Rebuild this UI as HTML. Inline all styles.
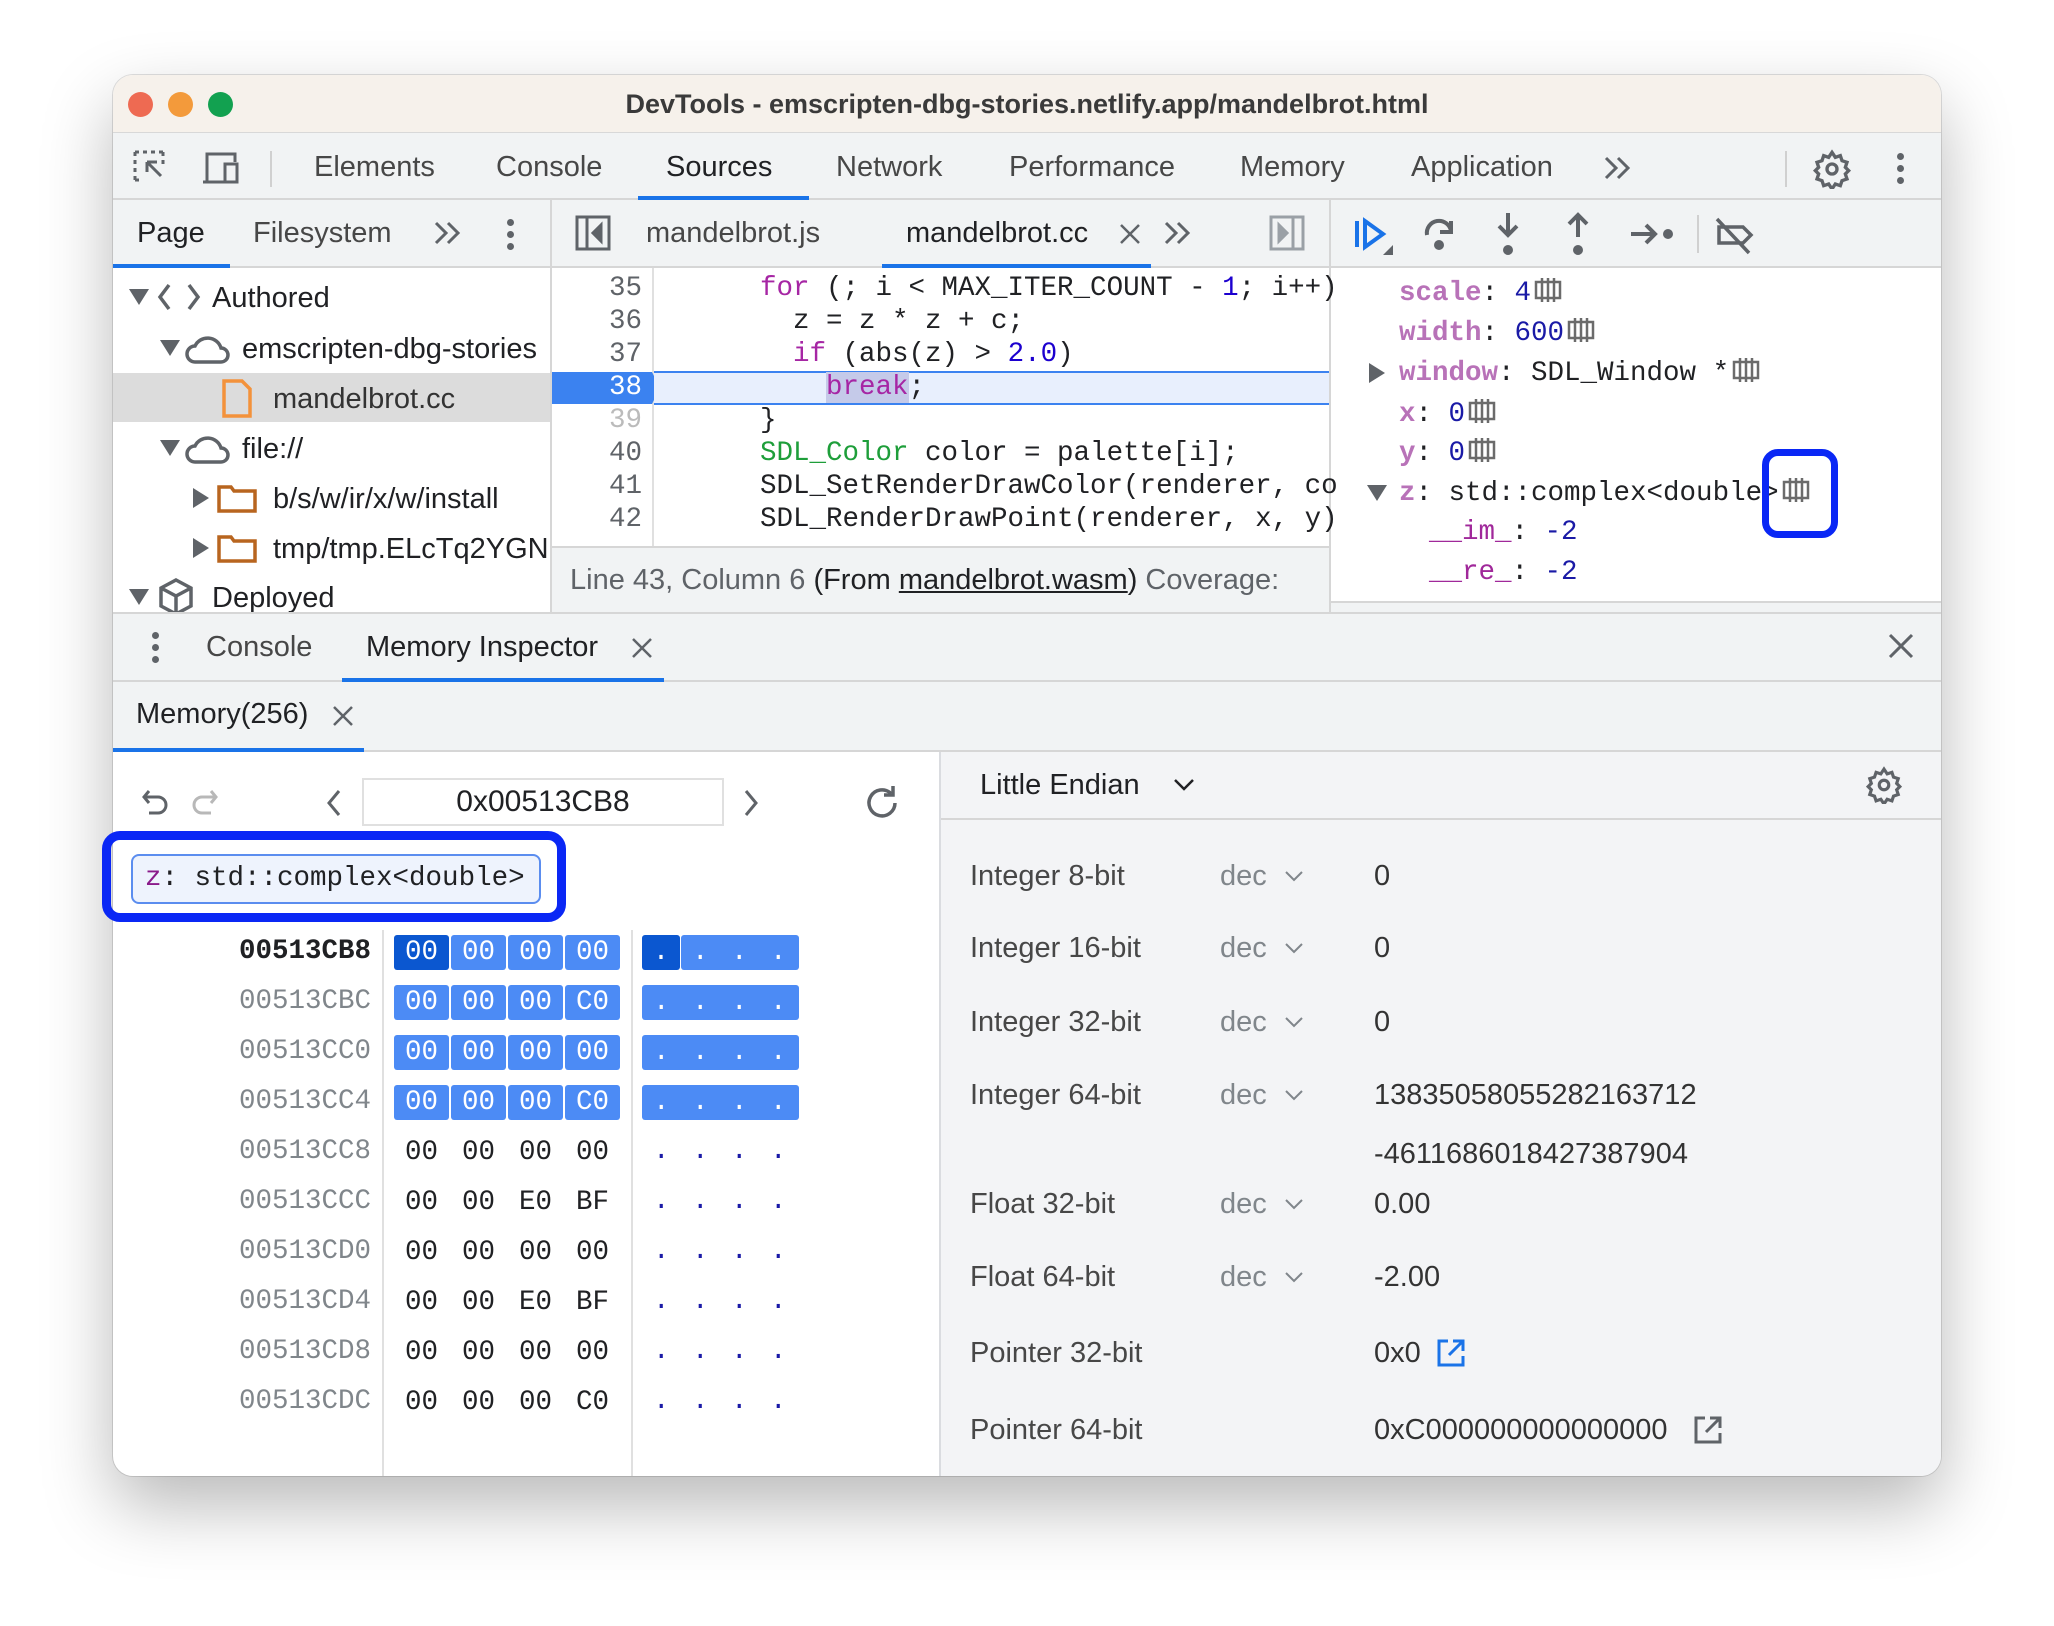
<!DOCTYPE html>
<html><head><meta charset="utf-8"><style>
*{margin:0;padding:0;box-sizing:border-box}
body{width:2054px;height:1626px;background:#fff;position:relative;overflow:hidden;font-family:"Liberation Sans",Arial,sans-serif;color:#202124}
.a{position:absolute;white-space:nowrap}
.win{position:absolute;left:113px;top:75px;width:1828px;height:1401px;border-radius:20px;overflow:hidden;background:#fff;box-shadow:0 30px 70px rgba(0,0,0,.28),0 0 0 1px rgba(0,0,0,.12)}
.ui{font-size:29px;line-height:40px;color:#474747}
.mono{font-family:"Liberation Mono","DejaVu Sans Mono",monospace;font-size:27.5px;line-height:33px;white-space:pre}
.hl{background:#f1f3f4}
.kw{color:#a626a4}.gr{color:#1e9e3a}.nu{color:#1c00cf}
.k{color:#b872b8;font-weight:bold}.v{color:#1a1aa6}
.cell{position:absolute;height:35px;line-height:35px;text-align:center;color:#fff;background:#4c8bf5;border-radius:3px}
.b{position:absolute;width:55px;height:35px;line-height:35px;text-align:center;color:#202124}
.mi{display:inline-block;vertical-align:-4px;margin-left:2px}
</style></head><body>
<div class="win">
 <div class="a" style="left:0;top:0;width:1828px;height:58px;background:#f6f1eb;border-bottom:1px solid #d8d8d8"></div>
 <div class="a" style="left:15px;top:17px;width:25px;height:25px;border-radius:50%;background:#ee6a52"></div>
 <div class="a" style="left:55px;top:17px;width:25px;height:25px;border-radius:50%;background:#f39a3b"></div>
 <div class="a" style="left:95px;top:17px;width:25px;height:25px;border-radius:50%;background:#12a150"></div>
 <div class="a" style="left:0;top:9px;width:1828px;text-align:center;font-size:27px;line-height:40px;font-weight:bold;color:#3a3a3a">DevTools - emscripten-dbg-stories.netlify.app/mandelbrot.html</div>
 <div class="a hl" style="left:0;top:58px;width:1828px;height:67px;border-bottom:2px solid #d6d6d6"></div>
 <svg class="a" style="left:20px;top:73px" width="40" height="40" viewBox="0 0 40 40" fill="none" stroke="#5f6368" stroke-width="3"><path d="M2 4h4M10 4h4M18 4h4M26 4h4M2 4v4M2 12v4M2 20v4M2 28v4M2 32h4M30 4v4M30 12v4"/><path d="M14 14l14 14M14 14v10M14 14h10"/></svg>
 <svg class="a" style="left:88px;top:73px" width="44" height="40" viewBox="0 0 44 40" fill="none" stroke="#5f6368" stroke-width="3"><path d="M6 34V6h28v8M2 34h22"/><rect x="24" y="16" width="12" height="18"/></svg>
 <div class="a" style="left:157px;top:76px;width:2px;height:36px;background:#d0d0d0"></div>
 <div class="a ui" style="left:201px;top:72px">Elements</div>
 <div class="a ui" style="left:383px;top:72px">Console</div>
 <div class="a ui" style="left:553px;top:72px;color:#202124">Sources</div>
 <div class="a" style="left:525px;top:121px;width:171px;height:4px;background:#1a73e8"></div>
 <div class="a ui" style="left:723px;top:72px">Network</div>
 <div class="a ui" style="left:896px;top:72px">Performance</div>
 <div class="a ui" style="left:1127px;top:72px">Memory</div>
 <div class="a ui" style="left:1298px;top:72px">Application</div>
 <svg class="a" style="left:1490px;top:80px" width="30" height="26" fill="none" stroke="#5f6368" stroke-width="3"><path d="M3 3l10 10L3 23M15 3l10 10-10 10"/></svg>
 <div class="a" style="left:1672px;top:76px;width:2px;height:36px;background:#d0d0d0"></div>
 <svg class="a" style="left:1699px;top:74px" width="40" height="40" viewBox="0 0 24 24" fill="none" stroke="#5f6368" stroke-width="2"><circle cx="12" cy="12" r="3"/><path d="M12 2l2 3 3-1 1 3 3 1-1 3 2 2-2 2 1 3-3 1-1 3-3-1-2 3-2-3-3 1-1-3-3-1 1-3-2-2 2-2-1-3 3-1 1-3 3 1z"/></svg>
 <div class="a" style="left:1784px;top:78px;width:7px;height:7px;border-radius:50%;background:#5f6368;box-shadow:0 12px 0 #5f6368,0 24px 0 #5f6368"></div>
 <div class="a hl" style="left:0;top:125px;width:1828px;height:68px;border-bottom:2px solid #d6d6d6"></div>
 <div class="a ui" style="left:24px;top:138px;color:#202124">Page</div>
 <div class="a" style="left:0;top:189px;width:117px;height:4px;background:#1a73e8"></div>
 <div class="a ui" style="left:140px;top:138px">Filesystem</div>
 <svg class="a" style="left:320px;top:145px" width="30" height="26" fill="none" stroke="#5f6368" stroke-width="3"><path d="M3 3l10 10L3 23M15 3l10 10-10 10"/></svg>
 <div class="a" style="left:394px;top:144px;width:7px;height:7px;border-radius:50%;background:#5f6368;box-shadow:0 12px 0 #5f6368,0 24px 0 #5f6368"></div>
 <div class="a" style="left:437px;top:125px;width:2px;height:420px;background:#d6d6d6"></div>
 <svg class="a" style="left:462px;top:140px" width="36" height="36" viewBox="0 0 36 36" fill="none" stroke="#5f6368" stroke-width="3"><rect x="2" y="2" width="32" height="32"/><path d="M12 2v32M26 10l-8 8 8 8z" fill="#5f6368"/></svg>
 <div class="a ui" style="left:533px;top:138px">mandelbrot.js</div>
 <div class="a ui" style="left:793px;top:138px;color:#202124">mandelbrot.cc</div>
 <svg class="a" style="left:1006px;top:148px" width="22" height="22" stroke="#5f6368" stroke-width="2.5"><path d="M2 2l18 18M20 2L2 20"/></svg>
 <div class="a" style="left:769px;top:189px;width:269px;height:4px;background:#1a73e8"></div>
 <svg class="a" style="left:1050px;top:145px" width="30" height="26" fill="none" stroke="#5f6368" stroke-width="3"><path d="M3 3l10 10L3 23M15 3l10 10-10 10"/></svg>
 <svg class="a" style="left:1156px;top:140px" width="36" height="36" viewBox="0 0 36 36" fill="none" stroke="#9aa0a6" stroke-width="3"><rect x="2" y="2" width="32" height="32"/><path d="M24 2v32M10 10l8 8-8 8z" fill="#9aa0a6"/></svg>
 <div class="a" style="left:1216px;top:125px;width:2px;height:486px;background:#d6d6d6"></div>
 <svg class="a" style="left:1240px;top:140px" width="40" height="40" viewBox="0 0 40 40"><path d="M4 6v26" stroke="#1a73e8" stroke-width="4"/><path d="M12 6l18 13-18 13z" fill="none" stroke="#1a73e8" stroke-width="4"/><path d="M40 30v10h-10z" fill="#5f6368"/></svg>
 <svg class="a" style="left:1308px;top:140px" width="40" height="40" viewBox="0 0 40 40" fill="none" stroke="#5f6368" stroke-width="4"><path d="M6 20a12 12 0 0 1 24-4"/><path d="M30 6v11h-11"/><circle cx="18" cy="30" r="5" fill="#5f6368" stroke="none"/></svg>
 <svg class="a" style="left:1380px;top:136px" width="30" height="46" viewBox="0 0 30 46" fill="none" stroke="#5f6368" stroke-width="4"><path d="M15 2v22M6 15l9 9 9-9"/><circle cx="15" cy="39" r="5" fill="#5f6368" stroke="none"/></svg>
 <svg class="a" style="left:1450px;top:136px" width="30" height="46" viewBox="0 0 30 46" fill="none" stroke="#5f6368" stroke-width="4"><path d="M15 26V4M6 13l9-9 9 9"/><circle cx="15" cy="39" r="5" fill="#5f6368" stroke="none"/></svg>
 <svg class="a" style="left:1516px;top:144px" width="46" height="30" viewBox="0 0 46 30" fill="none" stroke="#5f6368" stroke-width="4"><path d="M2 15h24M17 6l9 9-9 9"/><circle cx="39" cy="15" r="5" fill="#5f6368" stroke="none"/></svg>
 <div class="a" style="left:1584px;top:140px;width:2px;height:38px;background:#d0d0d0"></div>
 <svg class="a" style="left:1600px;top:140px" width="44" height="40" viewBox="0 0 44 40" fill="none" stroke="#5f6368" stroke-width="3.5"><path d="M6 12h24l8 8-8 8H6z"/><path d="M4 4l32 34"/></svg>
 <!-- file tree -->
 <div class="a" style="left:0;top:298px;width:437px;height:49px;background:#dcdcdc"></div>
 <svg class="a" style="left:16px;top:214px" width="20" height="16"><path d="M0 0h20L10 16z" fill="#5f6368"/></svg>
 <svg class="a" style="left:44px;top:207px" width="44" height="30" fill="none" stroke="#5f6368" stroke-width="3.5"><path d="M12 3L3 15l9 12M32 3l9 12-9 12"/></svg>
 <div class="a ui" style="left:99px;top:203px;color:#202124">Authored</div>
 <svg class="a" style="left:47px;top:265px" width="20" height="16"><path d="M0 0h20L10 16z" fill="#5f6368"/></svg>
 <svg class="a" style="left:72px;top:257px" width="46" height="32" fill="none" stroke="#5f6368" stroke-width="3.5"><path d="M10 30a8 8 0 0 1 0-16 14 14 0 0 1 26 2 7 7 0 0 1 0 14z"/></svg>
 <div class="a ui" style="left:129px;top:254px;color:#202124">emscripten-dbg-stories</div>
 <svg class="a" style="left:108px;top:303px" width="32" height="40" fill="none" stroke="#f3923b" stroke-width="3.5"><path d="M3 3h18l8 8v27H3z"/></svg>
 <div class="a ui" style="left:160px;top:304px;color:#333">mandelbrot.cc</div>
 <svg class="a" style="left:47px;top:365px" width="20" height="16"><path d="M0 0h20L10 16z" fill="#5f6368"/></svg>
 <svg class="a" style="left:72px;top:357px" width="46" height="32" fill="none" stroke="#5f6368" stroke-width="3.5"><path d="M10 30a8 8 0 0 1 0-16 14 14 0 0 1 26 2 7 7 0 0 1 0 14z"/></svg>
 <div class="a ui" style="left:129px;top:354px;color:#202124">file://</div>
 <svg class="a" style="left:80px;top:413px" width="16" height="20"><path d="M0 0v20L16 10z" fill="#5f6368"/></svg>
 <svg class="a" style="left:104px;top:408px" width="40" height="30" fill="none" stroke="#b8651f" stroke-width="3.5"><path d="M2 4h12l3 4h21v20H2z"/></svg>
 <div class="a ui" style="left:160px;top:404px;color:#202124">b/s/w/ir/x/w/install</div>
 <svg class="a" style="left:80px;top:463px" width="16" height="20"><path d="M0 0v20L16 10z" fill="#5f6368"/></svg>
 <svg class="a" style="left:104px;top:458px" width="40" height="30" fill="none" stroke="#b8651f" stroke-width="3.5"><path d="M2 4h12l3 4h21v20H2z"/></svg>
 <div class="a ui" style="left:160px;top:454px;color:#202124">tmp/tmp.ELcTq2YGN</div>
 <svg class="a" style="left:16px;top:514px" width="20" height="16"><path d="M0 0h20L10 16z" fill="#5f6368"/></svg>
 <svg class="a" style="left:45px;top:503px" width="36" height="38" fill="none" stroke="#5f6368" stroke-width="3.5"><path d="M18 2l15 8v18l-15 8-15-8V10zM3 10l15 8 15-8M18 18v18"/></svg>
 <div class="a ui" style="left:99px;top:503px;color:#202124">Deployed</div>
 <!-- editor -->
 <div class="a" style="left:539px;top:193px;width:2px;height:352px;background:#e0e0e0"></div>
 <div class="a" style="left:439px;top:297px;width:100px;height:32px;background:#3b82f0"></div>
 <svg class="a" style="left:539px;top:297px" width="10" height="32"><path d="M0 0l8 16-8 16z" fill="#3b82f0"/></svg>
 <div class="a" style="left:541px;top:296px;width:675px;height:34px;background:#e8effd;border-top:2px solid #3b82f0;border-bottom:2px solid #3b82f0"></div>
 <div class="a mono" style="left:439px;top:197px;width:90px;text-align:right;color:#5f6368">35<br>36<br>37<br><span style="color:#fff">38</span><br><span style="color:#bbb">39</span><br>40<br>41<br>42</div>
 <div class="a mono" style="left:647px;top:197px;color:#202124"><span class="kw">for</span> (; i &lt; MAX_ITER_COUNT - <span class="nu">1</span>; i++)<br>  z = z * z + c;<br>  <span class="kw">if</span> (abs(z) &gt; <span class="nu">2.0</span>)<br>    <span class="kw" style="background:#c5cae9">break</span>;<br>}<br><span class="gr">SDL_Color</span> color = palette[i];<br>SDL_SetRenderDrawColor(renderer, co<br>SDL_RenderDrawPoint(renderer, x, y)</div>
 <div class="a hl" style="left:439px;top:471px;width:777px;height:140px;border-top:2px solid #d6d6d6"></div>
 <div class="a ui" style="left:457px;top:485px;color:#5f6368">Line 43, Column 6 <span style="color:#202124">(From <u>mandelbrot.wasm</u>)</span> Coverage:</div>
 <!-- scope -->
 <div class="a mono" style="left:1286px;top:201px"><span class="k">scale</span>: <span class="v">4</span><svg class="mi" width="30" height="28"><g fill="none" stroke="#6b6b6b" stroke-width="2.5"><rect x="3" y="6" width="24" height="16"/><path d="M9 2v24M15 2v24M21 2v24"/></g></svg></div>
 <div class="a mono" style="left:1286px;top:241px"><span class="k">width</span>: <span class="v">600</span><svg class="mi" width="30" height="28"><g fill="none" stroke="#6b6b6b" stroke-width="2.5"><rect x="3" y="6" width="24" height="16"/><path d="M9 2v24M15 2v24M21 2v24"/></g></svg></div>
 <svg class="a" style="left:1256px;top:288px" width="16" height="20"><path d="M0 0v20L16 10z" fill="#5f6368"/></svg>
 <div class="a mono" style="left:1286px;top:281px"><span class="k">window</span>: SDL_Window *<svg class="mi" width="30" height="28"><g fill="none" stroke="#6b6b6b" stroke-width="2.5"><rect x="3" y="6" width="24" height="16"/><path d="M9 2v24M15 2v24M21 2v24"/></g></svg></div>
 <div class="a mono" style="left:1286px;top:322px"><span class="k">x</span>: <span class="v">0</span><svg class="mi" width="30" height="28"><g fill="none" stroke="#6b6b6b" stroke-width="2.5"><rect x="3" y="6" width="24" height="16"/><path d="M9 2v24M15 2v24M21 2v24"/></g></svg></div>
 <div class="a mono" style="left:1286px;top:361px"><span class="k">y</span>: <span class="v">0</span><svg class="mi" width="30" height="28"><g fill="none" stroke="#6b6b6b" stroke-width="2.5"><rect x="3" y="6" width="24" height="16"/><path d="M9 2v24M15 2v24M21 2v24"/></g></svg></div>
 <svg class="a" style="left:1254px;top:410px" width="20" height="16"><path d="M0 0h20L10 16z" fill="#5f6368"/></svg>
 <div class="a mono" style="left:1286px;top:401px"><span class="k">z</span>: std::complex&lt;double&gt;<svg class="mi" width="30" height="28"><g fill="none" stroke="#6b6b6b" stroke-width="2.5"><rect x="3" y="6" width="24" height="16"/><path d="M9 2v24M15 2v24M21 2v24"/></g></svg></div>
 <div class="a mono" style="left:1316px;top:441px"><span style="color:#a0289a">__im_</span>: <span class="v">-2</span></div>
 <div class="a mono" style="left:1316px;top:481px"><span style="color:#a0289a">__re_</span>: <span class="v">-2</span></div>
 <div class="a" style="left:1649px;top:374px;width:76px;height:89px;border:7px solid #0a27f5;border-radius:16px"></div>
 <div class="a hl" style="left:1218px;top:526px;width:610px;height:85px;border-top:2px solid #d6d6d6"></div>
 <!-- drawer tabs -->
 <div class="a hl" style="left:0;top:537px;width:1828px;height:70px;border-top:2px solid #d6d6d6;border-bottom:2px solid #d6d6d6"></div>
 <div class="a" style="left:39px;top:557px;width:7px;height:7px;border-radius:50%;background:#5f6368;box-shadow:0 12px 0 #5f6368,0 24px 0 #5f6368"></div>
 <div class="a ui" style="left:93px;top:552px">Console</div>
 <div class="a ui" style="left:253px;top:552px;color:#202124">Memory Inspector</div>
 <svg class="a" style="left:518px;top:562px" width="22" height="22" stroke="#5f6368" stroke-width="2.5"><path d="M2 2l18 18M20 2L2 20"/></svg>
 <div class="a" style="left:229px;top:603px;width:322px;height:4px;background:#1a73e8"></div>
 <svg class="a" style="left:1775px;top:558px" width="26" height="26" stroke="#5f6368" stroke-width="3"><path d="M2 2l22 22M24 2L2 24"/></svg>
 <div class="a hl" style="left:0;top:607px;width:1828px;height:70px;border-bottom:2px solid #d6d6d6"></div>
 <div class="a ui" style="left:23px;top:619px;color:#202124">Memory(256)</div>
 <svg class="a" style="left:219px;top:630px" width="22" height="22" stroke="#5f6368" stroke-width="2.5"><path d="M2 2l18 18M20 2L2 20"/></svg>
 <div class="a" style="left:0;top:673px;width:251px;height:4px;background:#1a73e8"></div>
 <!-- memory left -->
 <svg class="a" style="left:28px;top:712px" width="30" height="30" fill="none" stroke="#5f6368" stroke-width="3"><path d="M8 4L3 10l5 6M3 10h14a8 8 0 0 1 0 16H8"/></svg>
 <svg class="a" style="left:76px;top:712px" width="30" height="30" fill="none" stroke="#b8b8b8" stroke-width="3"><path d="M22 4l5 6-5 6M27 10H13a8 8 0 0 0 0 16h9"/></svg>
 <svg class="a" style="left:213px;top:714px" width="16" height="28" fill="none" stroke="#5f6368" stroke-width="3"><path d="M13 2L3 14l10 12"/></svg>
 <div class="a" style="left:249px;top:703px;width:362px;height:48px;border:2px solid #e0e0e0;text-align:center;font-size:30px;line-height:44px;color:#202124">0x00513CB8</div>
 <svg class="a" style="left:630px;top:714px" width="16" height="28" fill="none" stroke="#5f6368" stroke-width="3"><path d="M3 2l10 12L3 26"/></svg>
 <svg class="a" style="left:750px;top:708px" width="40" height="40" fill="none" stroke="#5f6368" stroke-width="3.5"><path d="M32 20a13 13 0 1 1-4-9.5"/><path d="M30 3v9h-9"/></svg>
 <div class="a mono" style="left:18px;top:779px;width:410px;height:50px;border:2px solid #5b8def;background:#eef3fd;border-radius:8px;line-height:46px;padding-left:12px"><span style="color:#8a1a8a">z</span>: std::complex&lt;double&gt;</div>
 <div class="a" style="left:269px;top:855px;width:2px;height:570px;background:#e0e0e0"></div>
 <div class="a" style="left:518px;top:855px;width:2px;height:570px;background:#e0e0e0"></div>
 <div class="a mono" style="left:40px;top:852px;width:218px;text-align:right;line-height:50px;color:#80868b"><b style="color:#202124">00513CB8</b><br>00513CBC<br>00513CC0<br>00513CC4<br>00513CC8<br>00513CCC<br>00513CD0<br>00513CD4<br>00513CD8<br>00513CDC</div>
 <div class="cell mono" style="left:281px;top:860px;width:55px;background:#0b57d0">00</div>
 <div class="cell mono" style="left:338px;top:860px;width:55px">00</div>
 <div class="cell mono" style="left:395px;top:860px;width:55px">00</div>
 <div class="cell mono" style="left:452px;top:860px;width:55px">00</div>
 <div class="cell mono" style="left:281px;top:910px;width:55px">00</div>
 <div class="cell mono" style="left:338px;top:910px;width:55px">00</div>
 <div class="cell mono" style="left:395px;top:910px;width:55px">00</div>
 <div class="cell mono" style="left:452px;top:910px;width:55px">C0</div>
 <div class="cell mono" style="left:281px;top:960px;width:55px">00</div>
 <div class="cell mono" style="left:338px;top:960px;width:55px">00</div>
 <div class="cell mono" style="left:395px;top:960px;width:55px">00</div>
 <div class="cell mono" style="left:452px;top:960px;width:55px">00</div>
 <div class="cell mono" style="left:281px;top:1010px;width:55px">00</div>
 <div class="cell mono" style="left:338px;top:1010px;width:55px">00</div>
 <div class="cell mono" style="left:395px;top:1010px;width:55px">00</div>
 <div class="cell mono" style="left:452px;top:1010px;width:55px">C0</div>
 <div class="cell mono" style="left:529px;top:860px;width:38px;background:#0b57d0">.</div>
 <div class="cell mono" style="left:568px;top:860px;width:118px;text-align:left;padding-left:11px;letter-spacing:22.5px">...</div>
 <div class="cell mono" style="left:529px;top:910px;width:157px;text-align:left;padding-left:11px;letter-spacing:22.5px">....</div>
 <div class="cell mono" style="left:529px;top:960px;width:157px;text-align:left;padding-left:11px;letter-spacing:22.5px">....</div>
 <div class="cell mono" style="left:529px;top:1010px;width:157px;text-align:left;padding-left:11px;letter-spacing:22.5px">....</div>
 <div class="mono">
 <div class="b" style="left:281px;top:1060px">00</div><div class="b" style="left:338px;top:1060px">00</div><div class="b" style="left:395px;top:1060px">00</div><div class="b" style="left:452px;top:1060px">00</div>
 <div class="b" style="left:281px;top:1110px">00</div><div class="b" style="left:338px;top:1110px">00</div><div class="b" style="left:395px;top:1110px">E0</div><div class="b" style="left:452px;top:1110px">BF</div>
 <div class="b" style="left:281px;top:1160px">00</div><div class="b" style="left:338px;top:1160px">00</div><div class="b" style="left:395px;top:1160px">00</div><div class="b" style="left:452px;top:1160px">00</div>
 <div class="b" style="left:281px;top:1210px">00</div><div class="b" style="left:338px;top:1210px">00</div><div class="b" style="left:395px;top:1210px">E0</div><div class="b" style="left:452px;top:1210px">BF</div>
 <div class="b" style="left:281px;top:1260px">00</div><div class="b" style="left:338px;top:1260px">00</div><div class="b" style="left:395px;top:1260px">00</div><div class="b" style="left:452px;top:1260px">00</div>
 <div class="b" style="left:281px;top:1310px">00</div><div class="b" style="left:338px;top:1310px">00</div><div class="b" style="left:395px;top:1310px">00</div><div class="b" style="left:452px;top:1310px">C0</div>
 </div>
 <div class="a mono" style="left:540px;top:1052px;line-height:50px;color:#1a1aa6;letter-spacing:22.5px">....<br>....<br>....<br>....<br>....<br>....</div>
 <!-- memory right -->
 <div class="a" style="left:826px;top:677px;width:1002px;height:724px;border-left:2px solid #dadce0;background:#f3f4f6"></div>
 <div class="a" style="left:828px;top:743px;width:1000px;height:2px;background:#d6d6d6"></div>
 <div class="a ui" style="left:867px;top:690px;color:#202124">Little Endian</div>
 <svg class="a" style="left:1060px;top:703px" width="22" height="14" fill="none" stroke="#202124" stroke-width="2.5"><path d="M2 2l9 9 9-9"/></svg>
 <svg class="a" style="left:1752px;top:691px" width="38" height="38" viewBox="0 0 24 24" fill="none" stroke="#5f6368" stroke-width="2"><circle cx="12" cy="12" r="3"/><path d="M12 2l2 3 3-1 1 3 3 1-1 3 2 2-2 2 1 3-3 1-1 3-3-1-2 3-2-3-3 1-1-3-3-1 1-3-2-2 2-2-1-3 3-1 1-3 3 1z"/></svg>
 <div class="a ui" style="left:857px;top:781px">Integer 8-bit</div>
 <div class="a ui" style="left:857px;top:853px">Integer 16-bit</div>
 <div class="a ui" style="left:857px;top:927px">Integer 32-bit</div>
 <div class="a ui" style="left:857px;top:1000px">Integer 64-bit</div>
 <div class="a ui" style="left:857px;top:1109px">Float 32-bit</div>
 <div class="a ui" style="left:857px;top:1182px">Float 64-bit</div>
 <div class="a ui" style="left:857px;top:1258px">Pointer 32-bit</div>
 <div class="a ui" style="left:857px;top:1335px">Pointer 64-bit</div>
 <div class="a ui" style="left:1107px;top:781px;color:#80868b">dec</div>
 <div class="a ui" style="left:1107px;top:853px;color:#80868b">dec</div>
 <div class="a ui" style="left:1107px;top:927px;color:#80868b">dec</div>
 <div class="a ui" style="left:1107px;top:1000px;color:#80868b">dec</div>
 <div class="a ui" style="left:1107px;top:1109px;color:#80868b">dec</div>
 <div class="a ui" style="left:1107px;top:1182px;color:#80868b">dec</div>
 <svg class="a" style="left:1171px;top:795px" width="20" height="12" fill="none" stroke="#80868b" stroke-width="2"><path d="M2 2l8 8 8-8"/></svg>
 <svg class="a" style="left:1171px;top:867px" width="20" height="12" fill="none" stroke="#80868b" stroke-width="2"><path d="M2 2l8 8 8-8"/></svg>
 <svg class="a" style="left:1171px;top:941px" width="20" height="12" fill="none" stroke="#80868b" stroke-width="2"><path d="M2 2l8 8 8-8"/></svg>
 <svg class="a" style="left:1171px;top:1014px" width="20" height="12" fill="none" stroke="#80868b" stroke-width="2"><path d="M2 2l8 8 8-8"/></svg>
 <svg class="a" style="left:1171px;top:1123px" width="20" height="12" fill="none" stroke="#80868b" stroke-width="2"><path d="M2 2l8 8 8-8"/></svg>
 <svg class="a" style="left:1171px;top:1196px" width="20" height="12" fill="none" stroke="#80868b" stroke-width="2"><path d="M2 2l8 8 8-8"/></svg>
 <div class="a ui" style="left:1261px;top:781px;color:#333">0</div>
 <div class="a ui" style="left:1261px;top:853px;color:#333">0</div>
 <div class="a ui" style="left:1261px;top:927px;color:#333">0</div>
 <div class="a ui" style="left:1261px;top:1000px;color:#333">13835058055282163712</div>
 <div class="a ui" style="left:1261px;top:1059px;color:#333">-4611686018427387904</div>
 <div class="a ui" style="left:1261px;top:1109px;color:#333">0.00</div>
 <div class="a ui" style="left:1261px;top:1182px;color:#333">-2.00</div>
 <div class="a ui" style="left:1261px;top:1258px;color:#333">0x0</div>
 <svg class="a" style="left:1323px;top:1263px" width="30" height="30" fill="none" stroke="#1a73e8" stroke-width="3"><path d="M12 3H3v24h24v-9M17 3h10v10M27 3L13 17"/></svg>
 <div class="a ui" style="left:1261px;top:1335px;color:#333">0xC000000000000000</div>
 <svg class="a" style="left:1580px;top:1340px" width="30" height="30" fill="none" stroke="#5f6368" stroke-width="3"><path d="M12 3H3v24h24v-9M17 3h10v10M27 3L13 17"/></svg>
</div>
<div class="a" style="left:102px;top:831px;width:464px;height:91px;border:9px solid #0a27f5;border-radius:18px"></div>
</body></html>
